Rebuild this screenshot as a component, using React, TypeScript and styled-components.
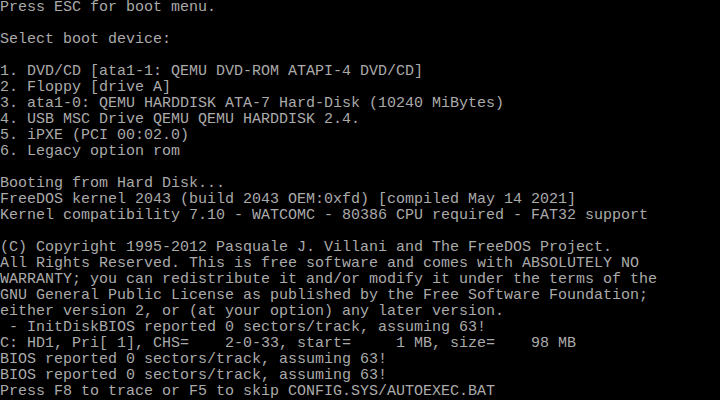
import styled, { createGlobalStyle } from 'styled-components';

const GlobalStyle = createGlobalStyle`
	html, body {
		margin: 0;
		padding: 0;
		background: #000;
	}
`;

const Screen = styled.div`
	width: 720px;
	height: 400px;
	overflow: hidden;
	background: #000;
	color: #aaaaaa;
	font-family: 'Liberation Mono', 'DejaVu Sans Mono', monospace;
	font-size: 15px;
	line-height: 16px;
	display: flex;
	flex-direction: column;
`;

const Line = styled.div`
	height: 16px;
	white-space: pre;
`;

const lines = [
	'Press ESC for boot menu.',
	'',
	'Select boot device:',
	'',
	'1. DVD/CD [ata1-1: QEMU DVD-ROM ATAPI-4 DVD/CD]',
	'2. Floppy [drive A]',
	'3. ata1-0: QEMU HARDDISK ATA-7 Hard-Disk (10240 MiBytes)',
	'4. USB MSC Drive QEMU QEMU HARDDISK 2.4.',
	'5. iPXE (PCI 00:02.0)',
	'6. Legacy option rom',
	'',
	'Booting from Hard Disk...',
	'FreeDOS kernel 2043 (build 2043 OEM:0xfd) [compiled May 14 2021]',
	'Kernel compatibility 7.10 - WATCOMC - 80386 CPU required - FAT32 support',
	'',
	'(C) Copyright 1995-2012 Pasquale J. Villani and The FreeDOS Project.',
	'All Rights Reserved. This is free software and comes with ABSOLUTELY NO',
	'WARRANTY; you can redistribute it and/or modify it under the terms of the',
	'GNU General Public License as published by the Free Software Foundation;',
	'either version 2, or (at your option) any later version.',
	' - InitDiskBIOS reported 0 sectors/track, assuming 63!',
	'C: HD1, Pri[ 1], CHS=    2-0-33, start=     1 MB, size=    98 MB',
	'BIOS reported 0 sectors/track, assuming 63!',
	'BIOS reported 0 sectors/track, assuming 63!',
	'Press F8 to trace or F5 to skip CONFIG.SYS/AUTOEXEC.BAT',
];

const App = () => {
	return (
		<>
			<GlobalStyle />
			<Screen>
				{lines.map((text, i) => (
					<Line key={i}>{text}</Line>
				))}
			</Screen>
		</>
	);
};

export default App;
